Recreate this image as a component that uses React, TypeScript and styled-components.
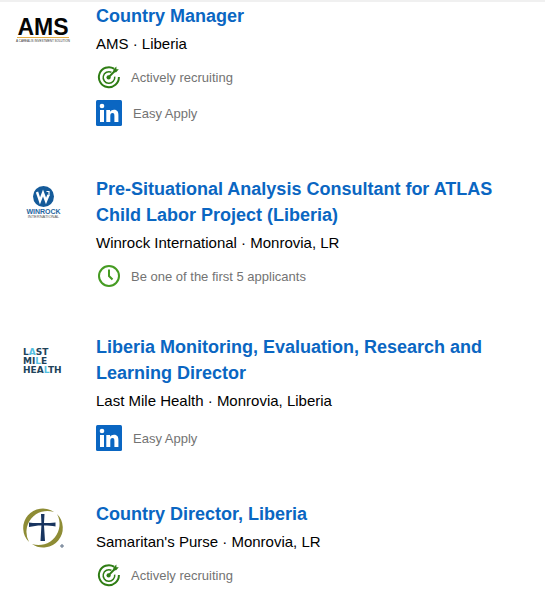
import React from "react";
import styled, { createGlobalStyle } from "styled-components";

const GlobalStyle = createGlobalStyle`
  body {
    margin: 0;
    background: #fff;
    font-family: "Liberation Sans", Arial, sans-serif;
  }
`;

const Page = styled.main`
  border-top: 2px solid #f0f0f0;
  padding: 1px 16px 0 17px;
  overflow: hidden;
`;

const JobList = styled.ul`
  display: flex;
  flex-direction: column;
  gap: 44px;
  margin: 0;
  padding: 0;
  list-style: none;
`;

const JobItem = styled.li`
  display: flex;
  align-items: flex-start;
  gap: 27px;
`;

const Logo = styled.svg`
  flex: none;
  width: 52px;
  height: 52px;
  overflow: visible;
  font-family: "Liberation Sans", Arial, sans-serif;
`;

const Details = styled.div`
  display: flex;
  flex-direction: column;
  flex: 1;
  min-width: 0;
  max-width: 410px;
`;

const Title = styled.h2`
  margin: 0;
  font-size: 18px;
  line-height: 26px;
  font-weight: 700;
`;

const TitleLink = styled.a`
  color: #0a66c2;
  text-decoration: none;

  &:hover {
    text-decoration: underline;
  }
`;

const Company = styled.p`
  margin: 0;
  color: #000;
  font-size: 15px;
  line-height: 30px;
`;

const Insight = styled.div<{ $badge?: boolean }>`
  display: flex;
  align-items: center;
  gap: 11px;
  margin: ${(p) => (p.$badge ? "9px 0 6px" : "6px 0 2px")};
  color: #737373;
  font-size: 13px;
  line-height: 20px;
`;

const Glyph = styled.svg<{ $size: number }>`
  flex: none;
  width: ${(p) => p.$size}px;
  height: ${(p) => p.$size}px;
`;

const InsightText = styled.span`
  padding-top: 2px;
`;

const TargetIcon = () => (
  <Glyph $size={24} viewBox="0 0 24 24" fill="none" stroke="#2f7d14" aria-hidden="true">
    <path d="M18 3.6A10 10 0 1 0 22.9 12" strokeWidth="2" />
    <path d="M15.4 7.2A5.8 5.8 0 1 0 18.7 11.6" strokeWidth="1.5" />
    <path d="M12.5 12.4L19.5 5.2" strokeWidth="2" />
    <path d="M17.4 7.2V4.4L20.4 1.6V4.2H22.8L20.2 7.2Z" fill="#2f7d14" stroke="none" />
    <circle cx="12.6" cy="12.4" r="2.1" fill="#2f7d14" stroke="none" />
  </Glyph>
);

const ClockIcon = () => (
  <Glyph $size={24} viewBox="0 0 24 24" fill="none" stroke="#459b22" strokeWidth="2" aria-hidden="true">
    <circle cx="13" cy="12" r="10" />
    <path d="M13 5.5V12L16.5 15.5" />
  </Glyph>
);

const LinkedInIcon = () => (
  <Glyph $size={26} viewBox="0 0 26 26" fill="#fff" aria-hidden="true">
    <rect width="26" height="26" rx="1.5" fill="#0a66c2" />
    <circle cx="6" cy="6" r="2.3" />
    <path d="M4 10H8V22H4Z" />
    <path d="M10.3 10H14.1V11.7C14.8 10.5 16.2 9.7 18 9.7C21.5 9.7 22.4 12 22.4 15.2V22H18.4V16C18.4 14.3 18.1 13.1 16.5 13.1C14.9 13.1 14.3 14.3 14.3 16V22H10.3Z" />
  </Glyph>
);

const AmsLogo = () => (
  <Logo viewBox="0 0 52 52" role="img" aria-label="AMS">
    <text x="26" y="32" textAnchor="middle" fontSize="23" fontWeight="700" fill="#050505">AMS</text>
    <path d="M0 34.5H52" stroke="#e3ad45" strokeWidth="1" />
    <text x="26" y="39" textAnchor="middle" fontSize="3" fill="#333">A CAREALIS INVESTMENT SOLUTION</text>
  </Logo>
);

const WinrockLogo = () => (
  <Logo viewBox="0 0 52 52" role="img" aria-label="Winrock International">
    <circle cx="26.5" cy="20.5" r="10.5" fill="#155b9a" />
    <path d="M20 16L23 25L26 17L29 25L31.5 19" fill="none" stroke="#fff" strokeWidth="2.4" />
    <path d="M29.5 15.5H32V20" fill="none" stroke="#fff" strokeWidth="1.2" />
    <text x="26.5" y="38" textAnchor="middle" fontSize="7" fontWeight="700" fill="#2465a0">WINROCK</text>
    <text x="26.5" y="42" textAnchor="middle" fontSize="4" fill="#555">INTERNATIONAL</text>
  </Logo>
);

const WordLogo = styled(Logo)`
  font-family: "DejaVu Sans", Inter, sans-serif;
  font-size: 9px;
  font-weight: 700;
`;

const LastMileLogo = () => (
  <WordLogo viewBox="0 0 52 52" role="img" aria-label="Last Mile Health" fill="#20435a">
    <text x="6" y="21">L<tspan fill="#55bfe2">A</tspan>ST</text>
    <text x="6" y="30">MI<tspan fill="#55bfe2">L</tspan>E</text>
    <text x="6" y="39">HEA<tspan fill="#55bfe2">L</tspan>TH</text>
  </WordLogo>
);

const SamaritanLogo = () => (
  <Logo viewBox="0 0 52 52" role="img" aria-label="Samaritan's Purse">
    <path d="M37 11A19.6 19.6 0 0 0 12 41A21 21 0 0 1 37 11Z" fill="#8e8c35" />
    <path d="M15 43A19.6 19.6 0 0 0 40 13A21 21 0 0 1 15 43Z" fill="#8e8c35" />
    <path d="M24 13H27.5L27 22C31 22 35 22 38.5 21.5V25.5C35 24.7 31 24.4 27 24.4L28 40H23.5L24.4 24.4C20 24.4 16 24.9 12 26V21.5C16 22.2 20 22.2 24.4 22Z" fill="#18345f" />
    <circle cx="45" cy="45" r="1.3" fill="#a5afbd" stroke="#65758a" strokeWidth="0.8" />
  </Logo>
);

type InsightKind = "recruiting" | "early" | "easy";

const insightContent: Record<InsightKind, { icon: React.ReactNode; label: string }> = {
  recruiting: { icon: <TargetIcon />, label: "Actively recruiting" },
  early: { icon: <ClockIcon />, label: "Be one of the first 5 applicants" },
  easy: { icon: <LinkedInIcon />, label: "Easy Apply" },
};

const jobs: { title: string; company: string; logo: React.ReactNode; insights: InsightKind[] }[] = [
  {
    title: "Country Manager",
    company: "AMS · Liberia",
    logo: <AmsLogo />,
    insights: ["recruiting", "easy"],
  },
  {
    title: "Pre-Situational Analysis Consultant for ATLAS Child Labor Project (Liberia)",
    company: "Winrock International · Monrovia, LR",
    logo: <WinrockLogo />,
    insights: ["early"],
  },
  {
    title: "Liberia Monitoring, Evaluation, Research and Learning Director",
    company: "Last Mile Health · Monrovia, Liberia",
    logo: <LastMileLogo />,
    insights: ["easy"],
  },
  {
    title: "Country Director, Liberia",
    company: "Samaritan's Purse · Monrovia, LR",
    logo: <SamaritanLogo />,
    insights: ["recruiting"],
  },
];

export default function App() {
  return (
    <>
      <GlobalStyle />
      <Page>
        <JobList>
          {jobs.map((job) => (
            <JobItem key={job.title}>
              {job.logo}
              <Details>
                <Title>
                  <TitleLink href="#">{job.title}</TitleLink>
                </Title>
                <Company>{job.company}</Company>
                {job.insights.map((kind) => (
                  <Insight key={kind} $badge={kind === "easy"}>
                    {insightContent[kind].icon}
                    <InsightText>{insightContent[kind].label}</InsightText>
                  </Insight>
                ))}
              </Details>
            </JobItem>
          ))}
        </JobList>
      </Page>
    </>
  );
}
